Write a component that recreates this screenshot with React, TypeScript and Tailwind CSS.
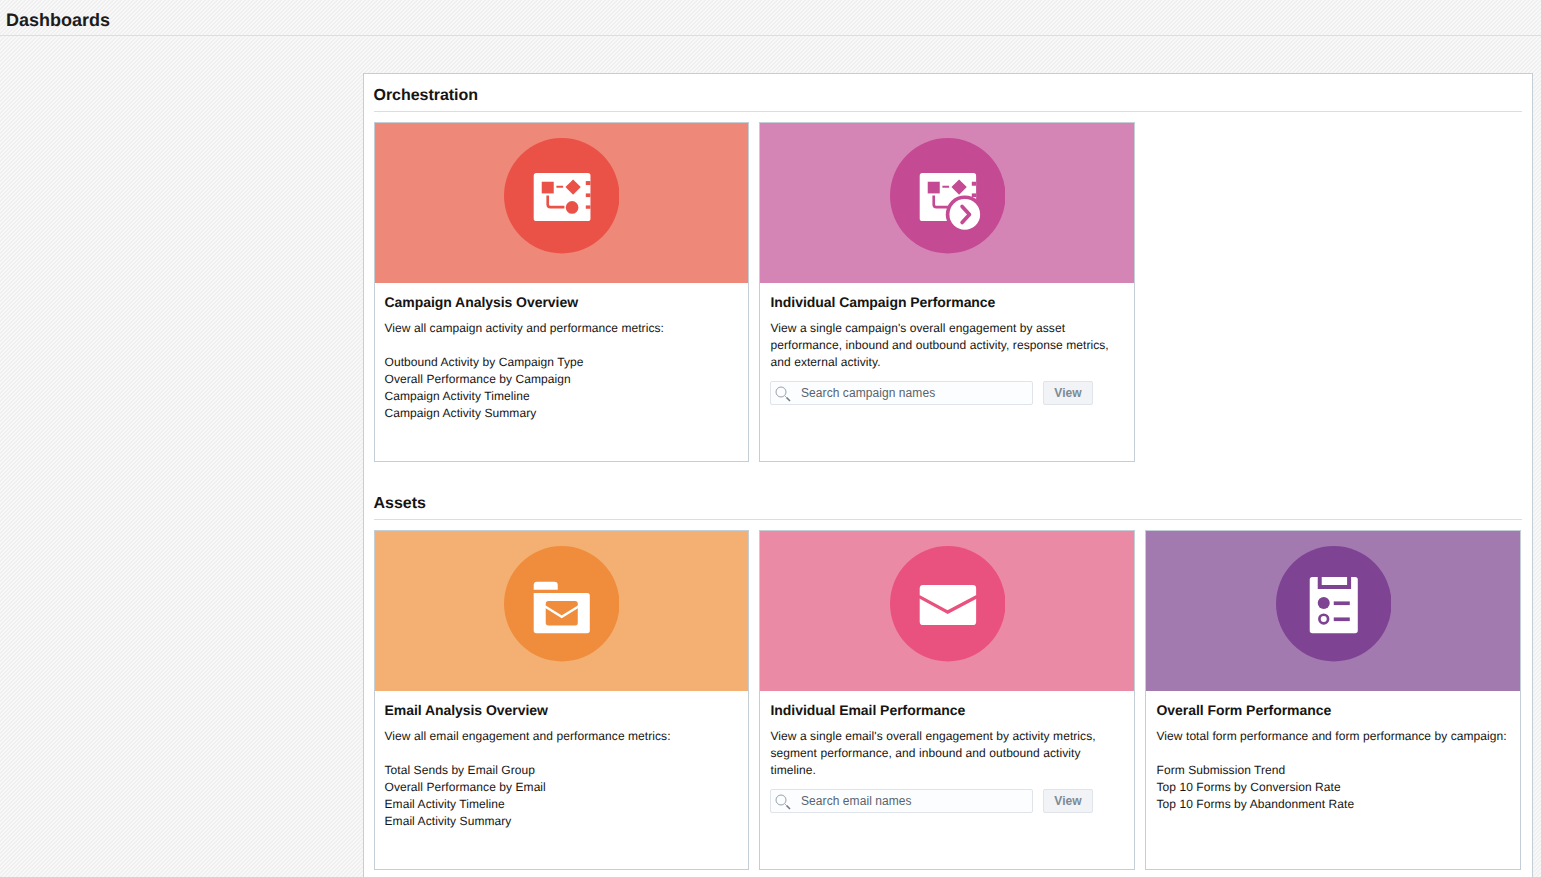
import React from 'react';

const FONT = "font-['Liberation_Sans',Arial,sans-serif] [text-rendering:geometricPrecision]";

function FlowShapes({ fill }: { fill: string }) {
  return (
    <>
      <rect x="124" y="154" width="36" height="35" fill={fill} />
      <rect x="168" y="166" width="20" height="6" fill={fill} />
      <path d="M218 147l23 23-23 23-23-23z" fill={fill} />
      <path d="M142 195v27q0 8 8 8h42" fill="none" stroke={fill} strokeWidth="8" />
      <circle cx="215" cy="231" r="19" fill={fill} />
    </>
  );
}

function CampaignIcon() {
  const c = '#ea5247';
  return (
    <svg viewBox="11 23 346 346" className="block w-[115.5px] h-[115.5px]">
      <circle cx="184" cy="196" r="173" fill={c} />
      <rect x="100" y="128" width="170" height="144" rx="8" fill="#fff" />
      <FlowShapes fill={c} />
      <rect x="256" y="152" width="14" height="12" fill={c} />
      <rect x="256" y="189" width="14" height="11" fill={c} />
      <rect x="256" y="225" width="14" height="10" fill={c} />
    </svg>
  );
}

function CampaignGoIcon() {
  const c = '#c44a93';
  return (
    <svg viewBox="14 23 346 346" className="block w-[115.5px] h-[115.5px]">
      <circle cx="187" cy="196" r="173" fill={c} />
      <rect x="103" y="128" width="169" height="144" rx="8" fill="#fff" />
      <g transform="translate(3 0)">
        <FlowShapes fill={c} />
      </g>
      <rect x="259" y="154" width="13" height="12" fill={c} />
      <rect x="259" y="189" width="13" height="11" fill={c} />
      <circle cx="238" cy="252" r="57" fill={c} />
      <circle cx="238" cy="252" r="46" fill="#fff" />
      <path d="M230 228l22 24-22 24" fill="none" stroke={c} strokeWidth="11" strokeLinecap="round" strokeLinejoin="round" />
    </svg>
  );
}

function FolderMailIcon() {
  const c = '#ef8d3d';
  return (
    <svg viewBox="11 17 346 346" className="block w-[115.5px] h-[115.5px]">
      <circle cx="184" cy="190" r="173" fill={c} />
      <path d="M100 148v-14q0-10 10-10h52q10 0 10 10v14z" fill="#fff" />
      <path d="M100 158h160q8 0 8 8v104q0 8-8 8H108q-8 0-8-8z" fill="#fff" />
      <rect x="136" y="182" width="96" height="73" rx="8" fill={c} />
      <path d="M134 198l50 31 50-31" fill="none" stroke="#fff" strokeWidth="7" />
    </svg>
  );
}

function MailIcon() {
  const c = '#e9527e';
  return (
    <svg viewBox="14 17 346 346" className="block w-[115.5px] h-[115.5px]">
      <circle cx="187" cy="190" r="173" fill={c} />
      <rect x="103" y="134" width="169" height="120" rx="10" fill="#fff" />
      <path d="M100 168l87 47 88-47" fill="none" stroke={c} strokeWidth="10" />
    </svg>
  );
}

function FormIcon() {
  const c = '#7f4393';
  return (
    <svg viewBox="17 17 346 346" className="block w-[115.5px] h-[115.5px]">
      <circle cx="190" cy="190" r="173" fill={c} />
      <rect x="118" y="110" width="144" height="168" rx="8" fill="#fff" />
      <path d="M148 110v30h88v-30" fill="none" stroke={c} strokeWidth="12" />
      <circle cx="160" cy="188" r="18" fill={c} />
      <rect x="190" y="183" width="48" height="11" fill={c} />
      <circle cx="160" cy="236" r="13" fill="none" stroke={c} strokeWidth="8" />
      <rect x="190" y="231" width="48" height="11" fill={c} />
    </svg>
  );
}

function SearchRow({ placeholder }: { placeholder: string }) {
  return (
    <div className="mt-[10px] -ml-[0.5px] flex gap-[10px]">
      <div className="relative w-[263px] h-[24px]">
        <svg viewBox="0 0 18 18" className="absolute left-[4px] top-[4px] w-[18px] h-[18px]" fill="none">
          <circle cx="7" cy="7" r="5" stroke="#98a2a9" strokeWidth="1" />
          <path d="M11 11l1.5 1.5" stroke="#a5adb3" strokeWidth="1" />
          <path d="M12.5 12.5l3.5 3.5" stroke="#6f7a82" strokeWidth="1.6" />
        </svg>
        <input
          placeholder={placeholder}
          className="w-full h-full pl-[30px] pr-2 text-[12px] bg-[#fcfdfe] border border-[#dfe4ea] rounded-[2px] placeholder:text-[#58636c] outline-none"
        />
      </div>
      <button className="w-[50px] h-[24px] text-[12px] font-bold text-[#7d8a94] bg-[#f1f3f6] border border-[#dfe4ea] rounded-[2px]">
        View
      </button>
    </div>
  );
}

function Card({
  hero,
  icon,
  title,
  first,
  children,
}: {
  hero: string;
  icon: React.ReactNode;
  title: string;
  first?: boolean;
  children: React.ReactNode;
}) {
  return (
    <div className="h-[340px] border border-[#c4ced7] bg-white">
      <div className={`h-[160px] pt-[15px] flex justify-center ${first ? '' : 'pl-[1px]'} ${hero}`}>{icon}</div>
      <div className={`pr-[10px] pt-[10px] ${first ? 'pl-[9.5px]' : 'pl-[10.5px]'}`}>
        <h3 className="text-[14px] leading-[18px] font-bold tracking-[-0.05px] text-[#161513]">{title}</h3>
        <div className="mt-[9px] text-[12px] leading-[17px] tracking-[0.07px] text-[#161513]">{children}</div>
      </div>
    </div>
  );
}

function Section({ title, children }: { title: string; children: React.ReactNode }) {
  return (
    <section>
      <h2 className="h-[28px] border-b border-[#d6dfe6] text-[16px] leading-[23px] font-bold tracking-[-0.03px] text-[#161513]">
        <span className="-ml-[0.5px] block">{title}</span>
      </h2>
      <div className="mt-[10px] grid grid-cols-[375px_376px_376px] gap-[10px]">{children}</div>
    </section>
  );
}

export default function App() {
  return (
    <div
      className={`${FONT} h-[877px] overflow-hidden bg-[#f4f4f4] bg-[linear-gradient(135deg,#f0f0f0_25%,#f8f8f8_25%,#f8f8f8_50%,#f0f0f0_50%,#f0f0f0_75%,#f8f8f8_75%)] bg-[length:4px_4px]`}
    >
      <header className="h-[36px] border-b border-[#d6dfe6] pl-[6px] pt-[9px]">
        <h1 className="text-[18px] leading-[22px] font-bold text-[#1c1c1c]">Dashboards</h1>
      </header>
      <main className="ml-[363px] mr-[8px] mt-[37px] h-[900px] border border-[#c4ced7] bg-white pl-[10px] pr-[10px] pt-[10px]">
        <Section title="Orchestration">
          <Card first hero="bg-[#ee8879]" icon={<CampaignIcon />} title="Campaign Analysis Overview">
            <p>View all campaign activity and performance metrics:</p>
            <p className="mt-[17px]">Outbound Activity by Campaign Type</p>
            <p>Overall Performance by Campaign</p>
            <p>Campaign Activity Timeline</p>
            <p>Campaign Activity Summary</p>
          </Card>
          <Card hero="bg-[#d585b5]" icon={<CampaignGoIcon />} title="Individual Campaign Performance">
            <p>
              View a single campaign's overall engagement by asset performance, inbound and outbound
              activity, response metrics, and external activity.
            </p>
            <SearchRow placeholder="Search campaign names" />
          </Card>
        </Section>
        <div className="h-[30px]" />
        <Section title="Assets">
          <Card first hero="bg-[#f4b073]" icon={<FolderMailIcon />} title="Email Analysis Overview">
            <p>View all email engagement and performance metrics:</p>
            <p className="mt-[17px]">Total Sends by Email Group</p>
            <p>Overall Performance by Email</p>
            <p>Email Activity Timeline</p>
            <p>Email Activity Summary</p>
          </Card>
          <Card hero="bg-[#eb8aa4]" icon={<MailIcon />} title="Individual Email Performance">
            <p>
              View a single email's overall engagement by activity metrics, segment performance, and
              inbound and outbound activity timeline.
            </p>
            <SearchRow placeholder="Search email names" />
          </Card>
          <Card hero="bg-[#a27ab0]" icon={<FormIcon />} title="Overall Form Performance">
            <p>View total form performance and form performance by campaign:</p>
            <p className="mt-[17px]">Form Submission Trend</p>
            <p>Top 10 Forms by Conversion Rate</p>
            <p>Top 10 Forms by Abandonment Rate</p>
          </Card>
        </Section>
      </main>
    </div>
  );
}
